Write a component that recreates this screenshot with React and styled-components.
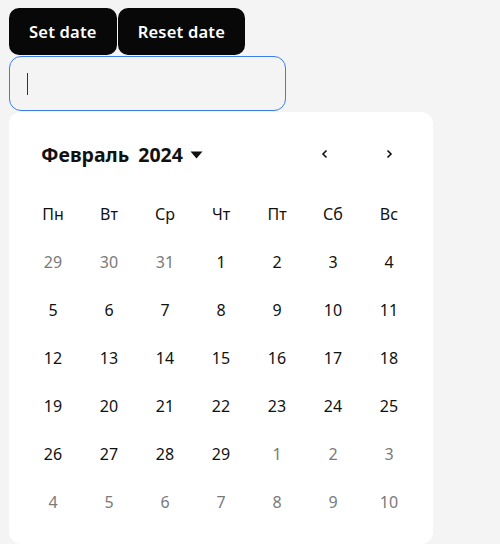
import styled, { createGlobalStyle } from "styled-components";

const GlobalStyle = createGlobalStyle`
  body {
    margin: 8px 9px;
    background: #f4f4f4;
    font-family: "Noto Sans", "Open Sans", sans-serif;
  }
`;

const weekDays = ["Пн", "Вт", "Ср", "Чт", "Пт", "Сб", "Вс"];

const buildDays = () => {
  const days = [];
  [29, 30, 31].forEach((d) => days.push({ d, outside: true }));
  for (let d = 1; d <= 29; d++) days.push({ d, outside: false });
  for (let d = 1; d <= 10; d++) days.push({ d, outside: true });
  return days;
};

const Chevron = ({ dir }) => (
  <svg width="10" height="12" viewBox="0 0 10 12">
    <path
      d={dir === "left" ? "M6.5 2.5 L3 6 L6.5 9.5" : "M3.5 2.5 L7 6 L3.5 9.5"}
      fill="none"
      stroke="#111"
      strokeWidth="1.6"
    />
  </svg>
);

const App = () => {
  const days = buildDays();
  return (
    <>
      <GlobalStyle />
      <Toolbar>
        <ActionButton>Set date</ActionButton>
        <ActionButton>Reset date</ActionButton>
      </Toolbar>
      <Field>
        <Input type="text" readOnly />
        <Caret />
      </Field>
      <Calendar>
        <Header>
          <Title>
            <span>Февраль</span>
            <span>2024</span>
            <svg width="13" height="8" viewBox="0 0 13 8">
              <path d="M0.5 0.5 H12.5 L6.5 7.5 Z" fill="#111" />
            </svg>
          </Title>
          <Nav>
            <NavButton aria-label="prev">
              <Chevron dir="left" />
            </NavButton>
            <NavButton aria-label="next">
              <Chevron dir="right" />
            </NavButton>
          </Nav>
        </Header>
        <Grid>
          {weekDays.map((w) => (
            <Cell key={w}>{w}</Cell>
          ))}
          {days.map((day, i) => (
            <Cell key={i} outside={day.outside}>
              {day.d}
            </Cell>
          ))}
        </Grid>
      </Calendar>
    </>
  );
};

export default App;

const Toolbar = styled.div`
  display: flex;
  gap: 1px;
`;

const ActionButton = styled.button`
  height: 47px;
  padding: 0 20px;
  border: none;
  border-radius: 10px;
  background: #080808;
  color: #fff;
  font-family: "Noto Sans", sans-serif;
  font-size: 16.5px;
  font-weight: 600;
  letter-spacing: 0.2px;
  cursor: pointer;
`;

const Field = styled.div`
  position: relative;
  width: 277px;
  margin-top: 1px;
`;

const Input = styled.input`
  box-sizing: border-box;
  width: 277px;
  height: 55px;
  border: 1px solid #3b7cf2;
  border-radius: 12px;
  background: #f4f4f4;
  outline: none;
  padding: 0 17px;
  font-size: 16px;
  caret-color: transparent;
`;

const Caret = styled.span`
  position: absolute;
  left: 18px;
  top: 17px;
  width: 1px;
  height: 22px;
  background: #333;
`;

const Calendar = styled.div`
  box-sizing: border-box;
  width: 424px;
  margin-top: 1px;
  padding: 22px 16px 18px;
  background: #fff;
  border-radius: 12px;
`;

const Header = styled.div`
  display: flex;
  align-items: center;
  justify-content: space-between;
  height: 40px;
  padding: 0 4px 0 16px;
  margin-bottom: 16px;
`;

const Title = styled.div`
  display: flex;
  align-items: center;
  gap: 9px;
  font-size: 19.5px;
  font-weight: 700;
  color: #111;

  > svg {
    margin-left: -2px;
    margin-top: 1px;
  }
`;

const Nav = styled.div`
  display: flex;
  gap: 16px;
`;

const NavButton = styled.button`
  width: 48px;
  height: 40px;
  display: flex;
  align-items: center;
  justify-content: center;
  border: none;
  background: transparent;
  padding: 0;
  cursor: pointer;
`;

const Grid = styled.div`
  display: grid;
  grid-template-columns: repeat(7, 56px);
  grid-auto-rows: 48px;
`;

const Cell = styled.div`
  display: flex;
  align-items: center;
  justify-content: center;
  font-size: 16px;
  color: ${(props) => (props.outside ? "#7a7a7a" : "#111")};
`;
